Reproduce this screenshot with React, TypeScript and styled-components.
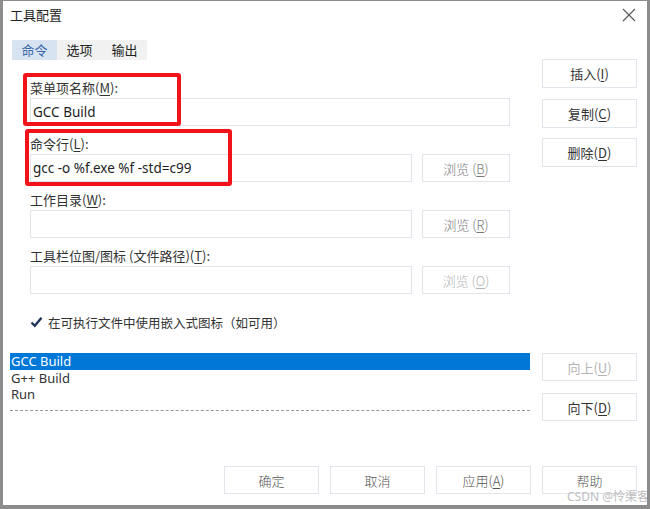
import styled, { createGlobalStyle } from 'styled-components';

const GlobalStyle = createGlobalStyle`
    html, body {
        margin: 0;
        padding: 0;
        background: #fff;
    }
    body {
        font-family: 'Noto Sans CJK SC', 'Noto Sans', sans-serif;
        color: #333;
    }
`;

const Window = styled.div`
    position: relative;
    width: 650px;
    height: 509px;
    box-sizing: border-box;
    border-style: solid;
    border-color: #8c8c8c;
    border-width: 1px 3px 4px 3px;
    background: #fff;
    display: flex;
    flex-direction: column;
    overflow: hidden;
`;

const TitleBar = styled.div`
    height: 39px;
    box-sizing: border-box;
    padding: 5px 10px 0 7px;
    display: flex;
    justify-content: space-between;
    align-items: flex-start;
`;

const Title = styled.div`
    font-size: 13px;
    line-height: 18px;
    color: #222;
`;

const CloseBtn = styled.div`
    width: 16px;
    height: 16px;
    margin-top: 1px;
    display: flex;
    align-items: center;
    justify-content: center;
`;

const Main = styled.div`
    display: grid;
    grid-template-columns: 520px 95px;
    column-gap: 12px;
    padding: 0 10px 0 7px;
    align-items: start;
`;

const TabStrip = styled.div`
    display: flex;
    margin-left: 2px;
    background: #f1f1f1;
    width: max-content;
`;

const Tab = styled.div<{ $active?: boolean }>`
    width: 45px;
    height: 20px;
    line-height: 20px;
    text-align: center;
    font-size: 13px;
    color: ${(p) => (p.$active ? '#3a6aa6' : '#222')};
    background: ${(p) => (p.$active ? '#d8e3f2' : 'transparent')};
`;

const Form = styled.div`
    display: flex;
    flex-direction: column;
    gap: 8px;
    padding-left: 20px;
    margin-top: 18px;
`;

const Field = styled.div`
    position: relative;
    display: flex;
    flex-direction: column;
`;

const Label = styled.div`
    font-size: 13px;
    line-height: 20px;
    color: #333;
    u {
        text-decoration-thickness: 1px;
        text-underline-offset: 2px;
    }
`;

const InputRow = styled.div`
    display: flex;
    gap: 10px;
`;

const Input = styled.div<{ $short?: boolean }>`
    width: ${(p) => (p.$short ? '382px' : '480px')};
    height: 28px;
    box-sizing: border-box;
    border: 1px solid #e0e4ea;
    background: #fff;
    font-family: 'Noto Sans', 'Noto Sans CJK SC', sans-serif;
    font-size: 13.5px;
    line-height: 26px;
    padding-left: 2px;
    color: #1e1e1e;
`;

type Tone = 'normal' | 'soft' | 'muted' | 'disabled';

const toneColor: Record<Tone, string> = {
    normal: '#333',
    soft: '#555',
    muted: '#7a7a7a',
    disabled: '#b4b4b4',
};

const Button = styled.div<{ $tone?: Tone; $h?: number; $w?: number; $serif?: boolean }>`
    width: ${(p) => p.$w ?? 95}px;
    height: ${(p) => p.$h ?? 28}px;
    box-sizing: border-box;
    border: 1px solid #e2e5eb;
    background: #fff;
    display: flex;
    align-items: center;
    justify-content: center;
    font-size: 13px;
    color: ${(p) => toneColor[p.$tone ?? 'normal']};
    font-family: ${(p) =>
        p.$serif
            ? "'Noto Sans CJK SC', 'Liberation Serif', serif"
            : "'Noto Sans CJK SC', sans-serif"};
    font-weight: ${(p) => (p.$serif ? 300 : 400)};
    u {
        text-decoration-thickness: 1px;
        text-underline-offset: 2px;
    }
`;

const RedMark = styled.div<{ $l: number; $t: number; $w: number; $h: number }>`
    position: absolute;
    left: ${(p) => p.$l}px;
    top: ${(p) => p.$t}px;
    width: ${(p) => p.$w}px;
    height: ${(p) => p.$h}px;
    box-sizing: border-box;
    border: 4px solid #f2131a;
    border-radius: 3px;
    pointer-events: none;
`;

const CheckRow = styled.div`
    display: flex;
    align-items: center;
    gap: 5px;
    margin-top: 10px;
    height: 20px;
    font-size: 12.5px;
    color: #333;
`;

const SideButtons = styled.div<{ $top: number; $gap: number }>`
    display: flex;
    flex-direction: column;
    gap: ${(p) => p.$gap}px;
    margin-top: ${(p) => p.$top}px;
`;

const List = styled.div`
    margin-top: 21px;
    font-family: 'Noto Sans', 'Noto Sans CJK SC', sans-serif;
    font-size: 13px;
    color: #333;
`;

const ListItem = styled.div<{ $selected?: boolean }>`
    height: 16.5px;
    line-height: 16.5px;
    padding-left: 1px;
    background: ${(p) => (p.$selected ? '#0078d7' : 'transparent')};
    color: ${(p) => (p.$selected ? '#fff' : '#333')};
`;

const Separator = styled.div`
    margin-top: 7px;
    border-top: 1px dashed #999;
`;

const Footer = styled.div`
    margin-top: auto;
    display: flex;
    justify-content: flex-end;
    gap: 11px;
    padding: 0 10px 11px 0;
`;

const Watermark = styled.div`
    position: absolute;
    right: -2px;
    bottom: 0;
    font-size: 12px;
    color: #bdbdbd;
    font-family: 'Noto Sans', 'Noto Sans CJK SC', sans-serif;
`;

const fields = [
    { label: '菜单项名称', key: 'M', value: 'GCC Build', browse: null },
    { label: '命令行', key: 'L', value: 'gcc -o %f.exe %f -std=c99', browse: 'B' },
    { label: '工作目录', key: 'W', value: '', browse: 'R' },
    { label: '工具栏位图/图标 (文件路径)', key: 'T', value: '', browse: 'O' },
];

const marks = [
    { l: -7, t: -5, w: 158, h: 53 },
    { l: -5, t: -5, w: 207, h: 57 },
];

export default function App() {
    return (
        <>
            <GlobalStyle />
            <Window>
                <TitleBar>
                    <Title>工具配置</Title>
                    <CloseBtn>
                        <svg width="14" height="14" viewBox="0 0 14 14">
                            <path d="M1 1L13 13M13 1L1 13" stroke="#555" strokeWidth="1.1" />
                        </svg>
                    </CloseBtn>
                </TitleBar>
                <Main>
                    <div>
                        <TabStrip>
                            <Tab $active>命令</Tab>
                            <Tab>选项</Tab>
                            <Tab>输出</Tab>
                        </TabStrip>
                        <Form>
                            {fields.map((f, i) => (
                                <Field key={f.key}>
                                    <Label>
                                        {f.label}(<u>{f.key}</u>):
                                    </Label>
                                    <InputRow>
                                        <Input $short={!!f.browse}>{f.value}</Input>
                                        {f.browse && (
                                            <Button
                                                $serif
                                                $w={88}
                                                $tone={f.browse === 'O' ? 'disabled' : 'muted'}
                                            >
                                                浏览 (<u>{f.browse}</u>)
                                            </Button>
                                        )}
                                    </InputRow>
                                    {marks[i] && (
                                        <RedMark
                                            $l={marks[i].l}
                                            $t={marks[i].t}
                                            $w={marks[i].w}
                                            $h={marks[i].h}
                                        />
                                    )}
                                </Field>
                            ))}
                            <CheckRow>
                                <svg width="13" height="12" viewBox="0 0 13 12">
                                    <path
                                        d="M1.5 6.5L4.8 9.8L11.5 1.8"
                                        fill="none"
                                        stroke="#1d3557"
                                        strokeWidth="2.4"
                                    />
                                </svg>
                                在可执行文件中使用嵌入式图标（如可用）
                            </CheckRow>
                        </Form>
                    </div>
                    <SideButtons $top={19} $gap={10.5}>
                        <Button $h={29}>
                            插入(<u>I</u>)
                        </Button>
                        <Button $h={29}>
                            复制(<u>C</u>)
                        </Button>
                        <Button $h={29}>
                            删除(<u>D</u>)
                        </Button>
                    </SideButtons>
                    <List>
                        <ListItem $selected>GCC Build</ListItem>
                        <ListItem>G++ Build</ListItem>
                        <ListItem>Run</ListItem>
                        <Separator />
                    </List>
                    <SideButtons $top={21} $gap={12}>
                        <Button $tone="disabled">
                            向上(<u>U</u>)
                        </Button>
                        <Button>
                            向下(<u>D</u>)
                        </Button>
                    </SideButtons>
                </Main>
                <Footer>
                    <Button $serif $tone="soft">确定</Button>
                    <Button $serif $tone="soft">取消</Button>
                    <Button $serif $tone="soft">
                        应用(<u>A</u>)
                    </Button>
                    <Button $serif $tone="soft">帮助</Button>
                </Footer>
                <Watermark>CSDN @怜渠客</Watermark>
            </Window>
        </>
    );
}
